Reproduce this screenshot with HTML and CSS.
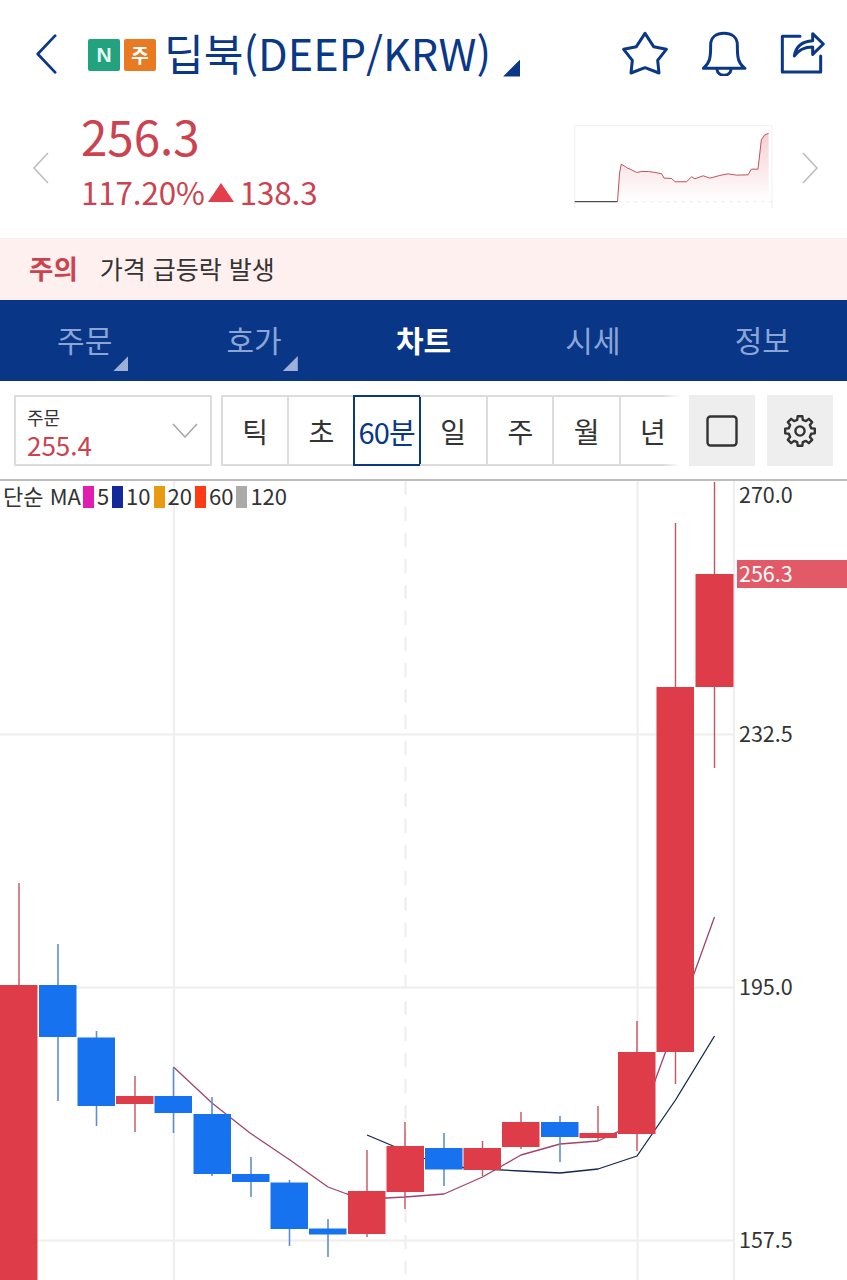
FILE: index.html
```html
<!DOCTYPE html>
<html lang="ko">
<head>
<meta charset="utf-8">
<title>딥북</title>
<link rel="stylesheet" href="styles.css">
</head>
<body>
<div class="page">
  <header class="header">
    <svg class="back" viewBox="0 0 24 44"><path d="M22 2 3 22l19 20"/></svg>
    <span class="badge badge-n">N</span>
    <span class="badge badge-j">주</span>
    <h1 class="title">딥북(DEEP/KRW)</h1>
    <span class="title-tri"></span>
    <div class="actions">
      <svg class="act" viewBox="243 90 138 135"><polygon points="312,97 338,137 376,145 350,178 354,216 312,200 270,216 274,178 248,145 286,137"/></svg>
      <svg class="act" viewBox="480 90 138 135"><path d="M487 202h125M489 200c18-16 20-30 20-68 0-24 18-35 40-35s40 11 40 35c0 38 2 52 20 68M528 206c2 22 40 22 42 0"/></svg>
      <svg class="act" viewBox="720 90 138 135"><path d="M780 106h-53v107h115v-48M763 165c4-28 24-44 55-46V98l32 31-32 31v-22c-24 0-42 8-55 27z"/></svg>
    </div>
  </header>

  <section class="quote">
    <svg class="nav" viewBox="0 0 18 32"><path d="M16 1 2 16l14 15"/></svg>
    <div class="prices">
      <div class="price">256.3</div>
      <div class="change"><span>117.20%</span><span class="up"></span><span>138.3</span></div>
    </div>
    <svg class="spark" viewBox="102 375 597 250">
      <defs>
        <linearGradient id="sparkfill" x1="0" y1="0" x2="0" y2="1">
          <stop offset="0" stop-color="#e9808a" stop-opacity=".38"/>
          <stop offset="1" stop-color="#e9808a" stop-opacity="0"/>
        </linearGradient>
      </defs>
      <path class="spark-frame" d="M103 625V377h594v248"/>
      <path class="spark-base" d="M232 606h465"/>
      <path class="spark-area" d="M232 605 238 520 243 493 255 500 262 505 270 508 290 518 305 515 325 515 340 517 365 522 372 535 395 536 405 546 440 546 455 531 465 537 490 528 510 535 540 527 565 522 590 526 625 525 635 508 655 508 665 420 675 405 687 400V605z"/>
      <path class="spark-flat" d="M103 606H232"/>
      <path class="spark-line" d="M232 605 238 520 243 493 255 500 262 505 270 508 290 518 305 515 325 515 340 517 365 522 372 535 395 536 405 546 440 546 455 531 465 537 490 528 510 535 540 527 565 522 590 526 625 525 635 508 655 508 665 420 675 405 687 400"/>
    </svg>
    <svg class="nav nav-r" viewBox="0 0 18 32"><path d="M2 1l14 15L2 31"/></svg>
  </section>

  <section class="notice"><strong>주의</strong><span>가격 급등락 발생</span></section>

  <nav class="tabs">
    <a class="tab tab-more">주문</a>
    <a class="tab tab-more">호가</a>
    <a class="tab tab-on">차트</a>
    <a class="tab">시세</a>
    <a class="tab">정보</a>
  </nav>

  <section class="toolbar">
    <div class="select">
      <div class="select-label">주문</div>
      <div class="select-value">255.4</div>
      <svg class="select-chev" viewBox="0 0 26 15"><path d="M1 1l12 13L25 1"/></svg>
    </div>
    <div class="segs">
      <div class="seg">틱</div>
      <div class="seg">초</div>
      <div class="seg seg-on">60분</div>
      <div class="seg">일</div>
      <div class="seg">주</div>
      <div class="seg">월</div>
      <div class="seg">년</div>
    </div>
    <button class="tool"><svg viewBox="0 0 32 32"><rect x="1.5" y="1.5" width="29" height="29" rx="3"/></svg></button>
    <button class="tool tool-gear"><svg viewBox="-18 -18 36 36"><polygon points="2.35,-14.8 2.78,-11.16 5.92,-9.86 8.82,-12.14 12.14,-8.82 9.86,-5.92 11.16,-2.78 14.8,-2.35 14.8,2.35 11.16,2.78 9.86,5.92 12.14,8.82 8.82,12.14 5.92,9.86 2.78,11.16 2.35,14.8 -2.35,14.8 -2.78,11.16 -5.92,9.86 -8.82,12.14 -12.14,8.82 -9.86,5.92 -11.16,2.78 -14.8,2.35 -14.8,-2.35 -11.16,-2.78 -9.86,-5.92 -12.14,-8.82 -8.82,-12.14 -5.92,-9.86 -2.78,-11.16 -2.35,-14.8"/><circle r="4.6"/></svg></button>
  </section>

  <section class="chart">
    <svg class="plot" viewBox="0 481 847 799">
      <g class="grid">
        <path d="M0 734.5H734M0 987.5H734M0 1240.5H734M174 481V1280M637.5 481V1280M734 481V1280"/>
        <path class="grid-dash" d="M405.5 481V1280"/>
      </g>
      <polyline class="ma ma-p" points="173.5,1067 212,1103 250,1133 290,1160 328,1187 347,1194 367,1199 405,1197 444,1194 482.5,1177 521,1155 560,1144 598,1141 617,1132 637,1130 656,1078 675.5,1025 714.5,917"/>
      <polyline class="ma ma-k" points="367,1135 405,1151 444,1166 482.5,1169 521,1171 560,1173 598,1169 637,1156 675.5,1100 714.5,1036"/>
      <g class="wick-r">
        <path d="M19 883V985M135 1076V1132M367 1150V1237M405 1122V1209M482.5 1141V1176M521 1112V1149M598 1106V1141M637 1021V1151M675.5 523V1084M714.5 482V768"/>
      </g>
      <g class="wick-b">
        <path d="M58 944V1101M96.5 1031V1126M173.5 1067V1133M212 1097V1176M251 1157V1197M289.5 1180V1246M328 1219V1257M444 1133V1186M560 1116V1162"/>
      </g>
      <g class="body-r">
        <rect x="0" y="985" width="37.5" height="295"/>
        <rect x="116" y="1096" width="37.5" height="8"/>
        <rect x="348" y="1191" width="37.5" height="43"/>
        <rect x="386.5" y="1146" width="37.5" height="46"/>
        <rect x="463.5" y="1148" width="37.5" height="22"/>
        <rect x="502" y="1122" width="37.5" height="25"/>
        <rect x="579.5" y="1133" width="37.5" height="5"/>
        <rect x="618" y="1052" width="37.5" height="82"/>
        <rect x="656.5" y="687" width="37.5" height="365"/>
        <rect x="695.5" y="574" width="38" height="113"/>
      </g>
      <g class="body-b">
        <rect x="39" y="985" width="37.5" height="52"/>
        <rect x="77.5" y="1037.5" width="37.5" height="68.5"/>
        <rect x="154.5" y="1096" width="37.5" height="17"/>
        <rect x="193.5" y="1114" width="37.5" height="60"/>
        <rect x="232" y="1174" width="37.5" height="8"/>
        <rect x="270.5" y="1182.5" width="37.5" height="46.5"/>
        <rect x="309" y="1228.5" width="37.5" height="6"/>
        <rect x="425" y="1148" width="37.5" height="21.5"/>
        <rect x="541" y="1122" width="37.5" height="15"/>
      </g>
      <rect class="tag" x="737" y="560" width="110" height="28"/>
      <g class="axis">
        <text x="739" y="503">270.0</text>
        <text x="739" y="742">232.5</text>
        <text x="739" y="995">195.0</text>
        <text x="739" y="1248">157.5</text>
        <text class="tag-text" x="739" y="582">256.3</text>
      </g>
    </svg>
    <div class="legend">
      <span class="legend-name">단순 MA</span>
      <i class="sw sw-5"></i><span>5</span>
      <i class="sw sw-10"></i><span>10</span>
      <i class="sw sw-20"></i><span>20</span>
      <i class="sw sw-60"></i><span>60</span>
      <i class="sw sw-120"></i><span>120</span>
    </div>
  </section>
</div>
</body>
</html>
```
FILE: styles.css
```css
* { box-sizing: border-box; }
html, body { margin: 0; padding: 0; background: #fff; }
body { font-family: "Noto Sans CJK KR", "Noto Sans", sans-serif; color: #333; }
.page { width: 847px; height: 1280px; overflow: hidden; display: flex; flex-direction: column; }

/* header */
.header { height: 106px; flex: none; display: flex; align-items: center; padding: 0 21px 0 35px; color: #0a3887; }
.back { width: 22px; height: 42px; margin: 2px 31px 0 0; flex: none; }
.back path { fill: none; stroke: #0a3887; stroke-width: 3; stroke-linecap: round; stroke-linejoin: round; }
.badge { width: 32px; height: 32px; border-radius: 2px; color: #fff; font-size: 19px; font-weight: 700; display: flex; align-items: center; justify-content: center; margin: 3px 4px 0 0; flex: none; }
.badge-n { background: #22a27d; font-family: "Liberation Sans", sans-serif; font-size: 21px; color: #e4f5f4; }
.badge-j { background: #ea7a22; margin-right: 8px; }
.title { margin: 0; font-size: 43.2px; font-weight: 400; line-height: 1; white-space: nowrap; }
.title-tri { width: 17px; height: 17px; margin: 30px 0 0 12px; background: #0a3887; clip-path: polygon(100% 0, 100% 100%, 0 100%); flex: none; }
.actions { margin-left: auto; display: flex; gap: 33px; }
.act { width: 46px; height: 45px; display: block; }
.act polygon, .act path { fill: none; stroke: #0a3887; stroke-width: 9; stroke-linejoin: round; stroke-linecap: round; }

/* quote */
.quote { height: 132px; flex: none; display: flex; align-items: center; padding: 0 28px 11px 32px; }
.nav { width: 18px; height: 32px; margin-top: 3px; flex: none; }
.nav path { fill: none; stroke: #bdbdbd; stroke-width: 1.6; }
.prices { margin: 0 0 21px 31px; color: #cc434f; }
.price { font-size: 47.5px; line-height: 72px; }
.change { display: flex; align-items: center; font-size: 31.3px; line-height: 40px; letter-spacing: -0.1px; white-space: nowrap; }
.up { width: 0; height: 0; margin: 0 6px 0 3px; border-left: 13px solid transparent; border-right: 13px solid transparent; border-bottom: 19px solid #e23e4b; }
.spark { width: 199px; height: 83px; margin-left: auto; margin-right: 28px; flex: none; }
.spark-frame { fill: none; stroke: #e6e6e6; stroke-width: 2; }
.spark-base { fill: none; stroke: #e4e4e4; stroke-width: 2; stroke-dasharray: 12 12; }
.spark-area { fill: url(#sparkfill); }
.spark-flat { fill: none; stroke: #222; stroke-width: 3; }
.spark-line { fill: none; stroke: #c0505c; stroke-width: 3; stroke-linejoin: round; }

/* notice */
.notice { height: 62px; flex: none; background: #fdf0ef; display: flex; align-items: center; padding: 0 0 3px 29px; font-size: 25px; color: #333; }
.notice strong { color: #cc434f; font-size: 26.5px; font-weight: 700; margin-right: 22px; }

/* tabs */
.tabs { height: 81px; flex: none; background: #0a3688; display: grid; grid-template-columns: repeat(5, 1fr); padding-bottom: 3px; }
.tab { display: flex; align-items: center; justify-content: center; font-size: 30px; color: #8ba6d6; position: relative; }
.tab-on { color: #fff; font-weight: 700; }
.tab-more::after { content: ""; position: absolute; right: 41px; bottom: 7px; width: 15px; height: 15px; background: #9cb0d8; clip-path: polygon(100% 0, 100% 100%, 0 100%); }

/* toolbar */
.toolbar { height: 100px; flex: none; display: flex; align-items: flex-start; padding: 14px 0 0 14px; border-bottom: 2px solid #bcbcbc; }
.select { width: 198px; height: 71px; border: 2px solid #dcdcdc; padding: 9px 0 0 11px; position: relative; flex: none; }
.select-label { font-size: 18px; line-height: 22px; color: #333; }
.select-value { font-size: 26px; line-height: 33px; color: #cc434f; }
.select-chev { position: absolute; right: 12px; top: 26px; width: 26px; height: 15px; }
.select-chev path { fill: none; stroke: #a8a8a8; stroke-width: 1.6; }
.segs { width: 459px; height: 71px; margin-left: 9px; display: flex; position: relative; flex: none; overflow: hidden; }
.segs::after { content: ""; position: absolute; top: 0; right: 0; bottom: 0; width: 18px; background: linear-gradient(to right, rgba(255,255,255,0), #fff); }
.seg { flex: none; width: 66.3px; height: 71px; border: 2px solid #dcdcdc; border-right: 0; display: flex; align-items: center; justify-content: center; font-size: 28px; color: #333; }
.seg-on { width: 68.3px; margin: 0 -1px; border: 2px solid #0a3887; color: #0a3887; font-size: 29px; letter-spacing: -0.8px; }
.seg-on + .seg { border-left: 0; }
.tool { width: 66px; height: 71px; margin-left: 9px; padding: 0; border: 0; background: #eeeeee; display: flex; align-items: center; justify-content: center; flex: none; }
.tool svg { width: 32px; height: 32px; display: block; }
.tool rect, .tool polygon, .tool circle { fill: none; stroke: #333; stroke-width: 2.4; stroke-linejoin: round; }
.tool-gear { margin-left: 12px; }
.tool-gear svg { width: 36px; height: 36px; }

/* chart */
.chart { flex: 1; position: relative; }
.plot { width: 847px; height: 799px; display: block; }
.grid path { fill: none; stroke: #eeeeee; stroke-width: 2; }
.grid .grid-dash { stroke-dasharray: 14 12; }
.ma { fill: none; stroke-width: 1.3; stroke-linejoin: round; }
.ma-p { stroke: #a0446e; }
.ma-k { stroke: #12264f; }
.wick-r path { fill: none; stroke: #c9525e; stroke-width: 1.4; }
.wick-b path { fill: none; stroke: #5f8fd0; stroke-width: 1.6; }
.body-r rect { fill: #dd3c48; }
.body-b rect { fill: #1672ee; }
.tag { fill: #e25a68; }
.axis text { font-family: "Noto Sans CJK KR", sans-serif; font-size: 21.5px; fill: #333; }
.axis .tag-text { fill: #fff; }
.legend { position: absolute; left: 3px; top: 5px; height: 22px; display: flex; align-items: center; font-size: 22px; color: #333; white-space: nowrap; }
.legend span { margin: 0 3px; padding-bottom: 4px; }
.legend .legend-name { margin: 0 2px 0 0; }
.sw { width: 11px; height: 22px; display: block; }
.sw-5 { background: #e01fb0; }
.sw-10 { background: #13299b; }
.sw-20 { background: #e89a10; }
.sw-60 { background: #ff3b16; }
.sw-120 { background: #aaaaaa; }
```
